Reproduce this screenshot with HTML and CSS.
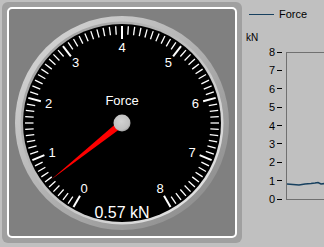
FILE: index.html
```html
<!DOCTYPE html>
<html lang="en">
<head>
    <meta charset="UTF-8">
    <title>Force Gauge</title>
    <link rel="stylesheet" href="styles.css">
</head>
<body>

<div class="frame">
    <div class="inner">
        <svg id="dial" class="dial" width="226" height="227" viewBox="0 0 226 227">
            <defs>
                <linearGradient id="bezelOuter" x1="0" y1="0" x2="1" y2="1">
                    <stop offset="0" stop-color="#dcdcdc"/>
                    <stop offset="1" stop-color="#858585"/>
                </linearGradient>
                <linearGradient id="bezelInner" x1="0" y1="0" x2="1" y2="1">
                    <stop offset="0" stop-color="#989898"/>
                    <stop offset="1" stop-color="#ececec"/>
                </linearGradient>
                <radialGradient id="hubFill" cx="0.45" cy="0.4" r="0.6">
                    <stop offset="0" stop-color="#d2d2d2"/>
                    <stop offset="0.8" stop-color="#c0c0c0"/>
                    <stop offset="1" stop-color="#a0a0a0"/>
                </radialGradient>
            </defs>
            <circle cx="113" cy="114" r="107" fill="url(#bezelOuter)"/>
            <circle cx="113" cy="114" r="101.5" fill="url(#bezelInner)"/>
            <circle cx="113" cy="114" r="99" fill="#000"/>
            <g id="ticks" stroke="#fff"></g>
            <g class="scale">
                <text x="75" y="179.5">0</text>
                <text x="43" y="143">1</text>
                <text x="39.6" y="94.3">2</text>
                <text x="66.7" y="53.7">3</text>
                <text x="113" y="38.5">4</text>
                <text x="159.3" y="53.7">5</text>
                <text x="186.4" y="94.3">6</text>
                <text x="183" y="143">7</text>
                <text x="151" y="179.5">8</text>
            </g>
            <text class="title" x="113" y="91">Force</text>
            <polygon class="needle" points="41.9,170.8 115.2,116.7 110.8,111.3"/>
            <circle cx="113" cy="114" r="8.5" fill="url(#hubFill)"/>
            <text class="readout" x="113" y="203">0.57 kN</text>
        </svg>
    </div>
</div>

<div class="chart">
    <div class="legend"><span class="legend-line"></span>Force</div>
    <div class="unit">kN</div>
    <div class="axis">
        <div class="ticks">
            <div class="tick">8</div>
            <div class="tick">7</div>
            <div class="tick">6</div>
            <div class="tick">5</div>
            <div class="tick">4</div>
            <div class="tick">3</div>
            <div class="tick">2</div>
            <div class="tick">1</div>
            <div class="tick">0</div>
        </div>
        <div class="plot">
            <svg class="trace" width="38" height="146" viewBox="0 0 38 146">
                <polyline points="0,131 6,131.5 12,132 18,131 24,130.5 28,130 31,129.5 34,131 38,130.5"/>
            </svg>
        </div>
    </div>
</div>

<script>
// scale ticks: 0..8 over 300 degrees, 10 minor steps per unit
var ticks = document.getElementById('ticks');
for (var i = 0; i <= 80; i++) {
    var a = (-150 + i * 3.75) * Math.PI / 180;
    var major = i % 10 === 0;
    var r1 = 97, r2 = major ? 84 : 88.5;
    var line = document.createElementNS('http://www.w3.org/2000/svg', 'line');
    line.setAttribute('x1', 113 + r1 * Math.sin(a));
    line.setAttribute('y1', 114 - r1 * Math.cos(a));
    line.setAttribute('x2', 113 + r2 * Math.sin(a));
    line.setAttribute('y2', 114 - r2 * Math.cos(a));
    line.setAttribute('stroke-width', major ? 2 : 1.3);
    ticks.appendChild(line);
}
</script>

</body>
</html>
```

FILE: styles.css
```css
body {
    margin: 0;
    height: 247px;
    overflow: hidden;
    background-color: #c0c0c0;
    font-family: "Liberation Sans", Arial, sans-serif;
    color: #000;
    display: flex;
}
.frame {
    margin: 2px 0 0 2px;
    width: 240px;
    height: 241px;
    box-sizing: border-box;
    padding: 5px;
    background-color: #a0a0a0;
    border-radius: 6px;
    flex-shrink: 0;
}
.inner {
    height: 100%;
    box-sizing: border-box;
    border: 2px solid #ffffff;
    border-radius: 5px;
    background-color: #808080;
}
.dial {
    display: block;
}
.scale text {
    fill: #ffffff;
    font-size: 13px;
    text-anchor: middle;
    dominant-baseline: central;
}
.title {
    fill: #ffffff;
    font-size: 13px;
    text-anchor: middle;
    dominant-baseline: central;
}
.readout {
    fill: #ffffff;
    font-size: 16px;
    text-anchor: middle;
    dominant-baseline: central;
}
.needle {
    fill: #ff0000;
}
.chart {
    flex: 1;
    padding-top: 8px;
    min-width: 0;
}
.legend {
    display: flex;
    align-items: center;
    height: 12px;
    padding-left: 7px;
    font-size: 11px;
}
.legend-line {
    width: 25px;
    height: 1px;
    background-color: #17405f;
    margin-right: 5px;
}
.unit {
    font-size: 10px;
    line-height: 12px;
    margin: 12px 0 0 4px;
}
.axis {
    display: flex;
    margin-top: 2px;
}
.ticks {
    width: 44px;
    height: 159px;
    flex-shrink: 0;
    display: flex;
    flex-direction: column;
    justify-content: space-between;
}
.tick {
    display: flex;
    justify-content: flex-end;
    align-items: center;
    height: 12px;
    line-height: 12px;
    font-size: 11px;
    padding-right: 4px;
}
.tick::after {
    content: "";
    width: 5px;
    height: 1px;
    background-color: #000;
    margin-left: 2px;
}
.plot {
    flex: 1;
    margin-top: 6px;
    height: 146px;
    border: 1px solid #707070;
    border-right: none;
    overflow: hidden;
}
.trace {
    display: block;
}
.trace polyline {
    fill: none;
    stroke: #17405f;
    stroke-width: 1.6;
}
```
